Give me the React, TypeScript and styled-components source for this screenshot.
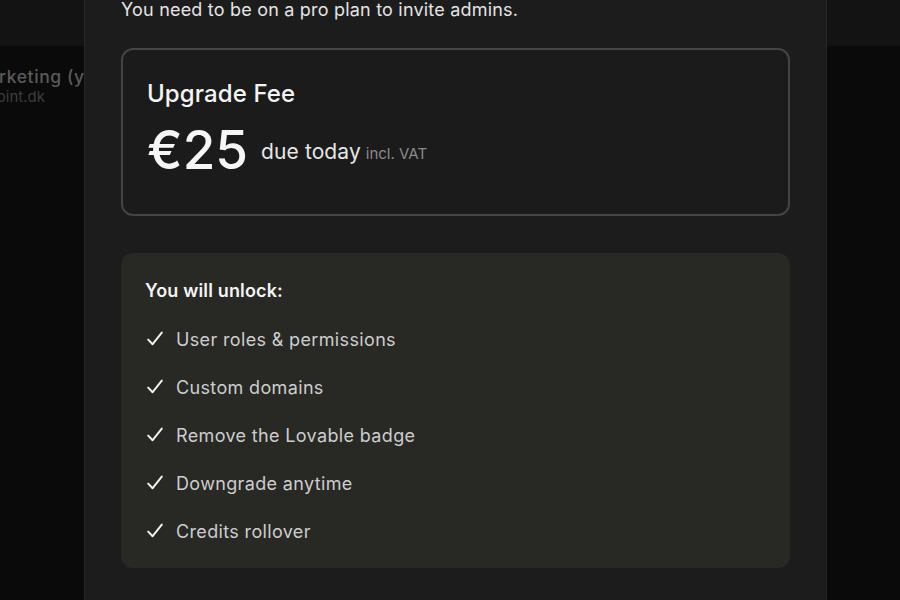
import React from "react";
import styled, { createGlobalStyle } from "styled-components";

const GlobalStyle = createGlobalStyle`
  html, body {
    margin: 0;
    padding: 0;
    background: #0a0a0a;
    overflow: hidden;
  }
  body {
    font-family: Inter, "Noto Sans", "Liberation Sans", sans-serif;
    -webkit-font-smoothing: antialiased;
  }
  #root {
    width: 900px;
    height: 600px;
    position: relative;
    overflow: hidden;
  }
`;

/* ---------- backdrop (page behind the dialog) ---------- */

const Backdrop = styled.div`
  display: flex;
  flex-direction: column;
  width: 900px;
  height: 600px;
  background: #0a0a0a;
`;

const TopBar = styled.div`
  height: 46px;
  background: #131313;
  flex-shrink: 0;
`;

const WorkspaceItem = styled.div`
  display: flex;
  flex-direction: column;
  padding-top: 20px;
  white-space: nowrap;
`;

const WorkspaceName = styled.div<{ $shift: number }>`
  margin-left: ${(p) => p.$shift}px;
  font-size: 17.5px;
  line-height: 22px;
  font-weight: 500;
  letter-spacing: 0.6px;
  color: #5b5b5b;
`;

const WorkspaceMail = styled.div<{ $shift: number }>`
  margin-left: ${(p) => p.$shift}px;
  font-size: 15px;
  line-height: 18px;
  color: #3d3d3d;
`;

/* ---------- dialog ---------- */

const Dialog = styled.div`
  position: absolute;
  top: 0;
  left: 84px;
  width: 743px;
  height: 600px;
  box-sizing: border-box;
  background: #1c1c1c;
  border-left: 1px solid #262626;
  border-right: 1px solid #262626;
  overflow: hidden;
`;

const DialogBody = styled.div`
  display: flex;
  flex-direction: column;
  padding: 0 36px;
`;

const Notice = styled.p`
  margin: -3px 0 0;
  font-size: 18px;
  line-height: 26px;
  letter-spacing: 0.2px;
  color: #e4e4e4;
`;

const FeeCard = styled.section`
  margin-top: 25px;
  height: 168px;
  box-sizing: border-box;
  border: 2px solid #444444;
  border-radius: 12px;
  background: #1b1b1b;
  padding: 29px 24px 0;
  display: flex;
  flex-direction: column;
`;

const FeeTitle = styled.h2`
  margin: 0;
  font-size: 24px;
  line-height: 30px;
  font-weight: 500;
  color: #f4f4f4;
  letter-spacing: 0.1px;
`;

const PriceRow = styled.div`
  display: flex;
  align-items: center;
  margin-top: 11px;
`;

const Price = styled.span`
  font-size: 53px;
  line-height: 60px;
  font-weight: 500;
  color: #f6f6f6;
`;

const DueGroup = styled.span`
  display: flex;
  align-items: baseline;
  margin-left: 13px;
  margin-top: 2px;
`;

const Due = styled.span`
  font-size: 21px;
  letter-spacing: 0.1px;
  color: #e6e6e6;
`;

const Vat = styled.span`
  margin-left: 5px;
  font-size: 15px;
  color: #8a8a8a;
`;

const UnlockCard = styled.section`
  margin-top: 37px;
  height: 315px;
  box-sizing: border-box;
  border-radius: 12px;
  background-color: #282825;
  background-image: radial-gradient(circle, rgba(0, 0, 0, 0.18) 0.7px, transparent 1px);
  background-size: 9px 9px;
  padding: 26px 24px 0;
  display: flex;
  flex-direction: column;
`;

const UnlockTitle = styled.h3`
  margin: 0;
  font-size: 18px;
  line-height: 24px;
  font-weight: 600;
  letter-spacing: 0.15px;
  color: #f4f4f4;
`;

const FeatureList = styled.ul`
  list-style: none;
  margin: 12px 0 0;
  padding: 0;
  display: flex;
  flex-direction: column;
`;

const Feature = styled.li`
  display: flex;
  align-items: center;
  gap: 12px;
  height: 48px;
  font-size: 18px;
  letter-spacing: 0.35px;
  color: #cdcdcd;
`;

const CheckIcon = styled.svg`
  width: 18px;
  height: 18px;
  flex-shrink: 0;
  margin-left: 1px;
`;

const Check = () => (
  <CheckIcon viewBox="0 0 18 18" fill="none">
    <path
      d="M2.2 9.6 L6.6 14.2 L15.8 2.6"
      stroke="#f2f2f2"
      strokeWidth="2"
      strokeLinecap="round"
      strokeLinejoin="round"
    />
  </CheckIcon>
);

const features = [
  "User roles & permissions",
  "Custom domains",
  "Remove the Lovable badge",
  "Downgrade anytime",
  "Credits rollover",
];

export default function App() {
  return (
    <>
      <GlobalStyle />
      <Backdrop>
        <TopBar />
        <WorkspaceItem>
          <WorkspaceName $shift={-28}>Marketing (your workspace)</WorkspaceName>
          <WorkspaceMail $shift={-30}>adpoint.dk</WorkspaceMail>
        </WorkspaceItem>
      </Backdrop>
      <Dialog>
        <DialogBody>
          <Notice>You need to be on a pro plan to invite admins.</Notice>
          <FeeCard>
            <FeeTitle>Upgrade Fee</FeeTitle>
            <PriceRow>
              <Price>€25</Price>
              <DueGroup>
                <Due>due today</Due>
                <Vat>incl. VAT</Vat>
              </DueGroup>
            </PriceRow>
          </FeeCard>
          <UnlockCard>
            <UnlockTitle>You will unlock:</UnlockTitle>
            <FeatureList>
              {features.map((f) => (
                <Feature key={f}>
                  <Check />
                  <span>{f}</span>
                </Feature>
              ))}
            </FeatureList>
          </UnlockCard>
        </DialogBody>
      </Dialog>
    </>
  );
}
